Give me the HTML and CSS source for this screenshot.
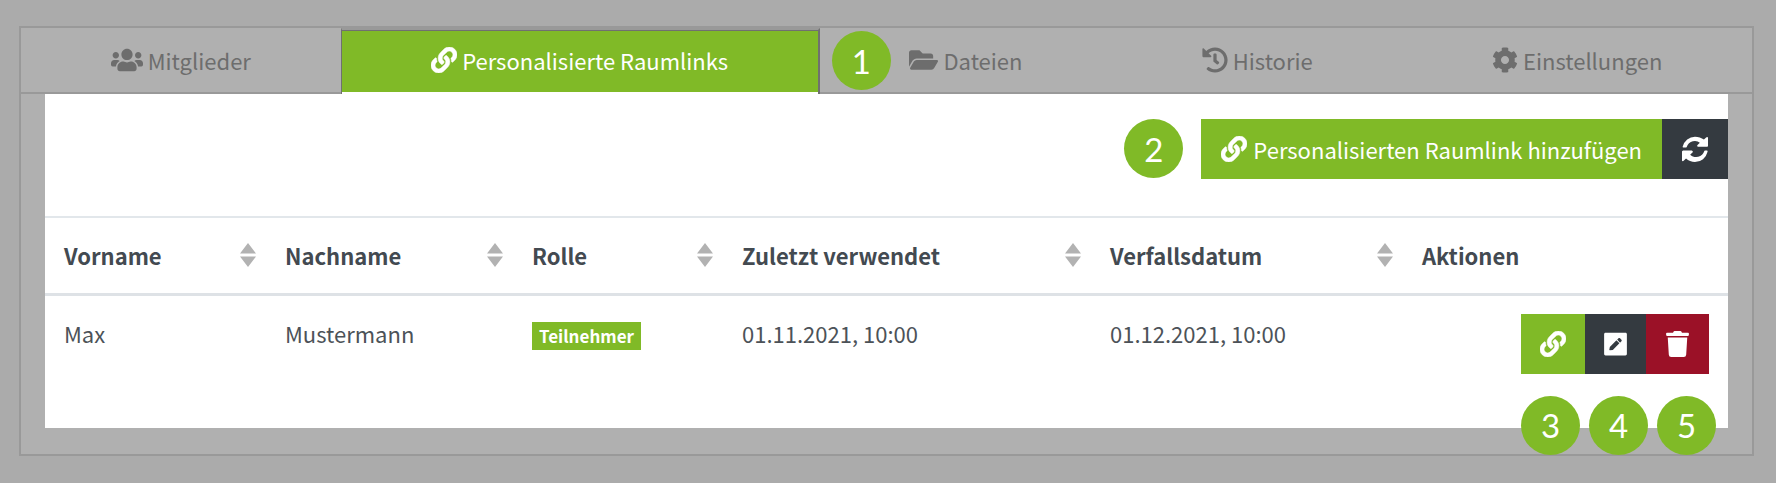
FILE: index.html
```
<!DOCTYPE html>
<html lang="de">
<head>
<meta charset="utf-8">
<title>Personalisierte Raumlinks</title>
<link rel="stylesheet" href="styles.css">
</head>
<body>
<svg class="sprite" aria-hidden="true">
  <symbol id="link" viewBox="0 0 512 512"><path d="M326.612 185.391c59.747 59.809 58.927 155.698.36 214.59-.11.12-.24.25-.36.37l-67.2 67.2c-59.27 59.27-155.699 59.262-214.96 0-59.27-59.26-59.27-155.7 0-214.96l37.106-37.106c9.84-9.84 26.786-3.3 27.294 10.606.648 17.722 3.826 35.527 9.69 52.721 1.986 5.822.567 12.262-3.783 16.612l-13.087 13.087c-28.026 28.026-28.905 73.66-1.155 101.96 28.024 28.579 74.086 28.749 102.325.51l67.2-67.19c28.191-28.191 28.073-73.757 0-101.83-3.701-3.694-7.429-6.564-10.341-8.569a16.037 16.037 0 0 1-6.947-12.606c-.396-10.567 3.348-21.456 11.698-29.806l21.054-21.055c5.521-5.521 14.182-6.199 20.584-1.731a152.482 152.482 0 0 1 20.522 17.197zM467.547 44.449c-59.261-59.262-155.69-59.27-214.96 0l-67.2 67.2c-.12.12-.25.25-.36.37-58.566 58.892-59.387 154.781.36 214.59a152.454 152.454 0 0 0 20.521 17.196c6.402 4.468 15.064 3.789 20.584-1.731l21.054-21.055c8.35-8.35 12.094-19.239 11.698-29.806a16.037 16.037 0 0 0-6.947-12.606c-2.912-2.005-6.64-4.875-10.341-8.569-28.073-28.073-28.191-73.639 0-101.83l67.2-67.19c28.239-28.239 74.3-28.069 102.325.51 27.75 28.3 26.872 73.934-1.155 101.96l-13.087 13.087c-4.35 4.35-5.769 10.79-3.783 16.612 5.864 17.194 9.042 34.999 9.69 52.721.509 13.906 17.454 20.446 27.294 10.606l37.106-37.106c59.271-59.259 59.271-155.699.001-214.959z" stroke="currentColor" stroke-width="10"/></symbol>
  <symbol id="users" viewBox="0 0 640 512"><path d="M96 224c35.3 0 64-28.7 64-64s-28.7-64-64-64-64 28.7-64 64 28.7 64 64 64zm448 0c35.3 0 64-28.7 64-64s-28.7-64-64-64-64 28.7-64 64 28.7 64 64 64zm32 32h-64c-17.6 0-33.5 7.1-45.1 18.6 40.3 22.1 68.9 62 75.1 109.4h66c17.7 0 32-14.3 32-32v-32c0-35.3-28.7-64-64-64zm-256 0c61.9 0 112-50.1 112-112S381.9 32 320 32 208 82.1 208 144s50.1 112 112 112zm76.8 32h-8.3c-20.8 10-43.9 16-68.5 16s-47.6-6-68.5-16h-8.3C179.6 288 128 339.6 128 403.2V432c0 26.5 21.5 48 48 48h288c26.5 0 48-21.5 48-48v-28.8c0-63.6-51.6-115.2-115.2-115.2zm-223.7-13.4C161.5 263.1 145.6 256 128 256H64c-35.3 0-64 28.7-64 64v32c0 17.7 14.3 32 32 32h65.9c6.3-47.4 34.9-87.3 75.2-109.4z"/></symbol>
  <symbol id="folder" viewBox="0 0 576 512"><path d="M572.694 292.093L500.27 416.248A63.997 63.997 0 0 1 444.989 448H45.025c-18.523 0-30.064-20.093-20.731-36.093l72.424-124.155A64 64 0 0 1 152 256h399.964c18.523 0 30.064 20.093 20.73 36.093zM152 224h328v-48c0-26.51-21.49-48-48-48H272l-64-64H48C21.49 64 0 85.49 0 112v278.046l69.077-118.418C86.214 242.25 117.989 224 152 224z"/></symbol>
  <symbol id="history" viewBox="0 0 512 512"><path d="M504 255.531c.253 136.64-111.18 248.372-247.82 248.468-59.015.042-113.223-20.53-155.822-54.911-11.077-8.94-11.905-25.541-1.839-35.607l11.267-11.267c8.609-8.609 22.353-9.551 31.891-1.984C173.062 425.135 212.781 440 256 440c101.705 0 184-82.311 184-184 0-101.705-82.311-184-184-184-48.814 0-93.149 18.969-126.068 49.932l50.754 50.754c10.08 10.08 2.941 27.314-11.313 27.314H24c-8.837 0-16-7.163-16-16V38.627c0-14.254 17.234-21.393 27.314-11.314l49.372 49.372C129.209 34.136 189.552 8 256 8c136.81 0 247.747 110.78 248 247.531zm-180.912 78.784l9.823-12.63c8.138-10.463 6.253-25.542-4.21-33.679L288 256.349V152c0-13.255-10.745-24-24-24h-16c-13.255 0-24 10.745-24 24v135.651l65.409 50.874c10.463 8.137 25.541 6.253 33.679-4.21z"/></symbol>
  <symbol id="cog" viewBox="0 0 512 512"><path d="M487.4 315.7l-42.6-24.6c4.3-23.2 4.3-47 0-70.2l42.6-24.6c4.9-2.8 7.1-8.6 5.5-14-11.1-35.6-30-67.8-54.7-94.6-3.8-4.1-10-5.1-14.8-2.3L380.8 110c-17.9-15.4-38.5-27.3-60.8-35.1V25.8c0-5.6-3.9-10.5-9.4-11.7-36.7-8.2-74.3-7.8-109.2 0-5.5 1.2-9.4 6.1-9.4 11.7V75c-22.2 7.9-42.8 19.8-60.8 35.1L88.7 85.5c-4.9-2.8-11-1.9-14.8 2.3-24.7 26.7-43.6 58.9-54.7 94.6-1.7 5.4.6 11.2 5.5 14L67.3 221c-4.3 23.2-4.3 47 0 70.2l-42.6 24.6c-4.9 2.8-7.1 8.6-5.5 14 11.1 35.6 30 67.8 54.7 94.6 3.8 4.1 10 5.1 14.8 2.3l42.6-24.6c17.9 15.4 38.5 27.3 60.8 35.1v49.2c0 5.6 3.9 10.5 9.4 11.7 36.7 8.2 74.3 7.8 109.2 0 5.5-1.2 9.4-6.1 9.4-11.7v-49.2c22.2-7.9 42.8-19.8 60.8-35.1l42.6 24.6c4.9 2.8 11 1.9 14.8-2.3 24.7-26.7 43.6-58.9 54.7-94.6 1.5-5.5-.7-11.3-5.6-14.1zM256 336c-44.1 0-80-35.9-80-80s35.9-80 80-80 80 35.9 80 80-35.9 80-80 80z"/></symbol>
  <symbol id="sync" viewBox="0 0 1536 1536"><path d="M1511 928q0 5-1 7-64 268-268 434.500t-478 166.500q-146 0-282.500-55t-243.500-157l-142 142q-19 19-50 19t-46-19v-540q0-26 19-45t45-19h510q26 0 45 19t19 45-19 45l-137 137q71 66 161 102t187 36q134 0 250-65t186-179q11-17 53-117 8-23 30-23h130q13 0 22.500 9.500t9.500 22.500zM1536 60v516q0 26-19 45t-45 19h-510q-26 0-45-19t-19-45 19-45l138-138q-110-100-287-100-134 0-250 65t-186 179q-11 17-53 117-8 23-30 23h-180q-13 0-22.500-9.500t-9.500-22.500v-7q65-268 270-434.500t460-166.500q146 0 284 55.500t245 120.500l130-129q19-19 60-19t30 19z"/></symbol>
  <symbol id="pen" viewBox="0 0 448 512"><path d="M420 480H28c-16 0-28-12-28-28V60c0-16 12-28 28-28h392c16 0 28 12 28 28v392c0 16-12 28-28 28zM238.100 187.900L112.400 313.600l-10.300 57.100c-.8 7.600 5.600 10.100 13.300 9.300l55.100-8.300L296.200 246c2.300-2.300 2.300-6.100 0-8.500L246.700 188c-2.500-2.400-6.300-2.400-8.600-.1zM341 171.100L312.900 143c-9.400-9.400-20.600-9.400-29.900 0l-23.100 23.100c-2.300 2.300-2.300 6.100 0 8.500l49.500 49.500c2.300 2.300 6.100 2.300 8.500 0L341 201c9.300-9.300 9.300-20.500 0-29.900z"/></symbol>
  <symbol id="trash" viewBox="0 0 448 512"><path d="M432 32H312l-9.400-18.700A24 24 0 0 0 281.100 0H166.800a23.720 23.720 0 0 0-21.400 13.300L136 32H16A16 16 0 0 0 0 48v32a16 16 0 0 0 16 16h416a16 16 0 0 0 16-16V48a16 16 0 0 0-16-16zM53.200 467a48 48 0 0 0 47.900 45h245.800a48 48 0 0 0 47.900-45L416 128H32z"/></symbol>
  <symbol id="sort" viewBox="0 0 16 24"><path d="M8 0l8 10.500H0zM0 13.500h16L8 24z"/></symbol>
</svg>

<main class="card">
  <nav class="tabs">
    <a class="tab" href="#mitglieder"><svg class="icon icon-wider"><use href="#users"/></svg>Mitglieder</a>
    <a class="tab tab-active" href="#raumlinks" aria-current="page"><svg class="icon"><use href="#link"/></svg>Personalisierte Raumlinks</a>
    <a class="tab" href="#dateien"><span class="step step-tab">1</span><svg class="icon icon-wide"><use href="#folder"/></svg>Dateien</a>
    <a class="tab" href="#historie"><svg class="icon"><use href="#history"/></svg>Historie</a>
    <a class="tab" href="#einstellungen"><svg class="icon"><use href="#cog"/></svg>Einstellungen</a>
  </nav>

  <section class="panel">
    <div class="toolbar">
      <span class="step">2</span>
      <div class="buttons">
        <button class="btn" type="button"><svg class="icon"><use href="#link"/></svg>Personalisierten Raumlink hinzufügen</button>
        <button class="btn btn-dark" type="button" aria-label="Aktualisieren"><svg class="icon"><use href="#sync"/></svg></button>
      </div>
    </div>

    <table class="links">
      <colgroup>
        <col class="col-first"><col class="col-last"><col class="col-role"><col class="col-used"><col class="col-expiry"><col>
      </colgroup>
      <thead>
        <tr>
          <th><span class="head">Vorname<svg class="sort"><use href="#sort"/></svg></span></th>
          <th><span class="head">Nachname<svg class="sort"><use href="#sort"/></svg></span></th>
          <th><span class="head">Rolle<svg class="sort"><use href="#sort"/></svg></span></th>
          <th><span class="head">Zuletzt verwendet<svg class="sort"><use href="#sort"/></svg></span></th>
          <th><span class="head">Verfallsdatum<svg class="sort"><use href="#sort"/></svg></span></th>
          <th><span class="head">Aktionen</span></th>
        </tr>
      </thead>
      <tbody>
        <tr>
          <td>Max</td>
          <td>Mustermann</td>
          <td><span class="role">Teilnehmer</span></td>
          <td>01.11.2021, 10:00</td>
          <td>01.12.2021, 10:00</td>
          <td>
            <div class="actions">
              <div class="buttons">
                <button class="btn" type="button" aria-label="Link kopieren"><svg class="icon"><use href="#link"/></svg></button>
                <button class="btn btn-dark" type="button" aria-label="Bearbeiten"><svg class="icon icon-narrow"><use href="#pen"/></svg></button>
                <button class="btn btn-danger" type="button" aria-label="Löschen"><svg class="icon icon-narrow"><use href="#trash"/></svg></button>
              </div>
              <div class="steps">
                <span class="step">3</span><span class="step">4</span><span class="step">5</span>
              </div>
            </div>
          </td>
        </tr>
      </tbody>
    </table>
  </section>
</main>
</body>
</html>
```
FILE: styles.css
```
* { box-sizing: border-box; }

body {
  margin: 0;
  padding: 26px 22px 26px 19px;
  background: #ababab;
  color: #4c5258;
  font-family: "Noto Sans CJK SC", "Noto Sans", sans-serif;
  font-size: 22px;
  line-height: 38px;
}

.sprite { position: absolute; width: 0; height: 0; }

.card {
  border: 2px solid #999;
  background: #b0b0b0;
  padding-bottom: 26px;
}

.tabs {
  display: flex;
  border-bottom: 2px solid #999;
}

.tab {
  position: relative;
  flex: 1 1 auto;
  display: flex;
  align-items: center;
  justify-content: center;
  gap: 5px;
  height: 64px;
  color: #6d6d6d;
  text-decoration: none;
}

.tab-active {
  height: 66px;
  margin-bottom: -2px;
  padding-bottom: 4px;
  border: solid #707070;
  border-width: 2px 2px 0 1px;
  border-top-color: #999;
  background: linear-gradient(#80ba27, #80ba27) top / 100% 62px no-repeat #fff;
  box-shadow: inset 0 1px #707070;
  color: #fff;
}

.icon { width: 26px; height: 26px; fill: currentColor; flex: none; }
.icon-wider { width: 32px; }
.icon-wide { width: 29px; }
.icon-narrow { width: 23px; }

.panel {
  margin: 0 24px;
  padding: 25px 0 36px;
  background: #fff;
}

.toolbar {
  display: flex;
  align-items: flex-start;
  justify-content: flex-end;
  gap: 18px;
  margin-bottom: 37px;
}

.buttons { display: flex; }

.btn {
  display: flex;
  align-items: center;
  gap: 6px;
  height: 60px;
  padding: 0 19px;
  border: 0;
  background: #80ba27;
  color: #fff;
  font: inherit;
}
.btn-dark { background: #343a40; }
.btn-danger { padding: 0 20px; background: #9b1127; }
.toolbar .btn { padding: 0 20px; }

.step {
  display: flex;
  align-items: center;
  justify-content: center;
  width: 59px;
  height: 59px;
  border-radius: 50%;
  background: #80ba27;
  color: #fff;
  font-family: Lato, sans-serif;
  font-size: 33px;
}
.step-tab { position: absolute; left: 12px; top: 3px; }

.links {
  width: 100%;
  table-layout: fixed;
  border-collapse: collapse;
}
.col-first { width: 221px; }
.col-last { width: 247px; }
.col-role { width: 210px; }
.col-used { width: 368px; }
.col-expiry { width: 312px; }

.links th {
  height: 77px;
  padding: 0 10px 0 19px;
  border-top: 2px solid #e2e7eb;
  border-bottom: 3px solid #dee2e6;
  color: #434a51;
  text-align: left;
}
.links td { padding: 18px 19px; vertical-align: top; }

.head {
  display: flex;
  align-items: center;
  justify-content: space-between;
}
.sort { width: 16px; height: 24px; fill: #b2b2b2; }

.role {
  display: inline-block;
  padding: 0 7px;
  background: #80ba27;
  color: #fff;
  font-size: 17px;
  font-weight: 700;
  line-height: 28px;
}

.actions {
  position: relative;
  width: max-content;
  margin-left: auto;
}
.steps {
  position: absolute;
  left: 0;
  top: 82px;
  display: flex;
  gap: 9px;
}
```
